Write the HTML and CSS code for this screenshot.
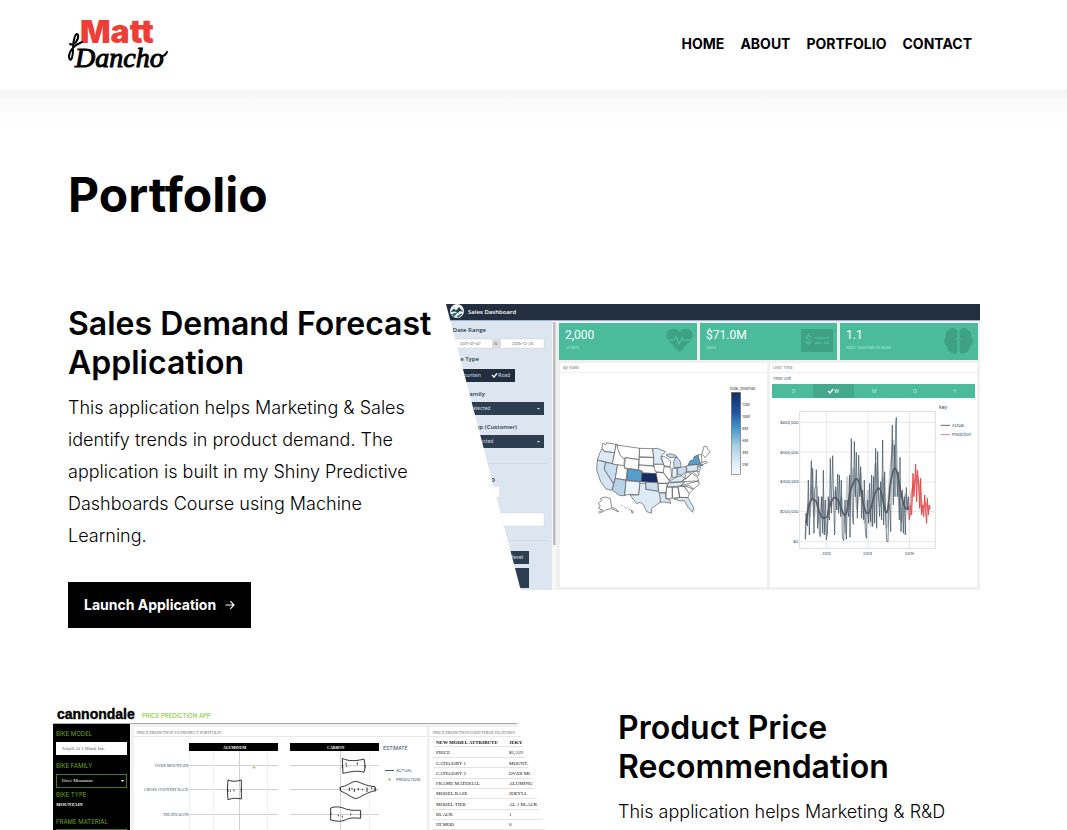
FILE: index.html
```html
<!DOCTYPE html>
<html lang="en">
<head>
<meta charset="utf-8">
<meta name="viewport" content="width=device-width, initial-scale=1">
<title>Portfolio - Matt Dancho</title>
<link rel="stylesheet" href="styles.css">
</head>
<body>
<header class="site-header">
  <a class="logo" href="#" aria-label="Matt Dancho">
    <svg width="100" height="60" viewBox="0 0 100 60">
      <text class="logo-first" x="12" y="28">Matt</text>
      <text class="logo-last" x="7" y="52">Dancho</text>
      <path class="logo-swash" d="M2 29C6 31 11 25 10 20C8 16 5 24 5 34C5 44 2 48 1 42C1 36 6 30 14 27M94 41C96 41 98 39 99 37"/>
    </svg>
  </a>
  <nav class="site-nav">
    <a href="#">Home</a>
    <a href="#">About</a>
    <a href="#">Portfolio</a>
    <a href="#">Contact</a>
  </nav>
</header>

<main class="content">
  <h1 class="page-title">Portfolio</h1>

  <section class="project">
    <div class="project-text">
      <h2>Sales Demand Forecast Application</h2>
      <p>This application helps Marketing &amp; Sales identify trends in product demand. The application is built in my Shiny Predictive Dashboards Course using Machine Learning.</p>
      <a class="launch" href="#">Launch Application
        <svg width="10" height="10" viewBox="0 0 10 10" aria-hidden="true"><path d="M0.5 5H9M5.3 1.2L9 5L5.3 8.8" fill="none" stroke="#fff" stroke-width="1.2"/></svg>
      </a>
    </div>
    <svg class="shot shot-right" viewBox="446 304 534 286" role="img" aria-label="Sales Dashboard">
      <rect x="446" y="304" width="534" height="286" fill="#f0f0f0"/>
      <rect x="446" y="320" width="106" height="270" fill="#dde6f0"/>
      <rect x="446" y="304" width="534" height="16" fill="#212f41"/>
      <rect x="446" y="320" width="534" height="1" fill="#9db3d2"/>
      <circle cx="457" cy="311" r="7" fill="#f4f7f8"/>
      <path d="M450.500 312L454 308.500L456 310.500L459 307L463.500 312L460 311L458 313L455 311.500Z" fill="#1f4650"/>
      <path d="M451 315L456 313.500L453 317M457 317L462 314" stroke="#32716f" fill="none" stroke-width="1.500"/>
      <g class="panel-label">
        <text x="468" y="314" fill="#fff">Sales Dashboard</text>
        <g fill="#26374a" text-anchor="end">
          <text x="486" y="332">Date Range</text>
          <text x="479" y="361">Bike Type</text>
          <text x="485" y="396">Bike Family</text>
          <text x="517" y="429">Bikeshop (Customer)</text>
        </g>
      </g>
      <rect x="448" y="339" width="96" height="9" fill="#fff" stroke="#ccd3db" stroke-width=".5"/>
      <rect x="492" y="339" width="9" height="9" fill="#ddd"/>
      <g class="t4" fill="#666"><text x="460" y="345">2011-01-07</text><text x="494" y="345">to</text><text x="512" y="345">2015-12-25</text></g>
      <rect x="448" y="369" width="67" height="13" fill="#202e3f"/>
      <g fill="#2c3e50">
        <rect x="448" y="402" width="96" height="13"/>
        <rect x="448" y="435" width="96" height="13"/>
        <rect x="500" y="551" width="29" height="13"/>
        <rect x="500" y="568" width="29" height="20"/>
      </g>
      <g class="t5" fill="#d4dae0">
        <text x="459" y="377">Mountain</text><text x="498" y="377">Road</text>
        <text x="463" y="410">All selected</text><text x="466" y="443">All selected</text>
        <text x="510" y="559">Reset</text>
      </g>
      <path d="M492 375L494 377L497 373.500" stroke="#fff" fill="none" stroke-width="1.300"/>
      <path d="M537 408h3l-1.500 1.500zM537 441h3l-1.500 1.500z" fill="#fff"/>
      <path d="M480 463.500H548M480 540.500H548" stroke="#d5dae0" stroke-width="1"/>
      <circle cx="493" cy="480" r="1.500" fill="none" stroke="#33465b"/>
      <rect x="470" y="487" width="29" height="10" fill="#fff"/>
      <rect x="470" y="513" width="74" height="13" fill="#fff" stroke="#d4dbe2" stroke-width=".5"/>
      <rect x="552" y="321" width="4" height="269" fill="#f8f8f8"/>
      <rect x="553" y="322" width="2.500" height="223" fill="#b9bbbd"/>

      <g fill="#4bbb9b">
        <rect x="559" y="323" width="138" height="37"/>
        <rect x="700" y="323" width="137" height="37"/>
        <rect x="840" y="323" width="138" height="37"/>
      </g>
      <g class="t12" fill="#fff"><text x="565" y="339">2,000</text><text x="706" y="339">$71.0M</text><text x="846" y="339">1.1</text></g>
      <g class="t4" fill="#a5e6d0"><text x="566" y="349">Orders</text><text x="706" y="349">Sales</text><text x="846" y="349">Ratio, Mountain to Road</text></g>
      <path d="M679.500 352L668 340C665 336 666 329 673 329C676 329 678 330 679.500 332C681 330 683 329 686 329C693 329 694 336 691 340Z" fill="#3ea183"/>
      <path d="M667 340H674L676 336L679 344L682 338L683 340H692" fill="none" stroke="#4bbb9b" stroke-width="1.500"/>
      <rect x="801" y="329" width="32" height="23" rx="1.500" fill="#3ea183"/>
      <text class="t12 dollar" x="805" y="344" fill="#4bbb9b">$</text>
      <path d="M815 338H829M815 343H821M824 343H829" stroke="#4bbb9b" stroke-width="1.500"/>
      <path d="M957.500 331C954 326 949 328 950 330C946 331 945 334 946 337C943 340 944 344 947 346C947 351 951 353 953 353C956 355 958 352 957.500 349ZM959.500 331C963 326 968 328 967 330C971 331 972 334 971 337C974 340 973 344 970 346C970 351 966 353 964 353C961 355 959 352 959.500 349Z" fill="#3ea183"/>
      <path d="M955.500 339.500L958.500 336.500L961.500 339.500M958.500 336.500V345" stroke="#4bbb9b" fill="none"/>

      <g fill="#fff">
        <rect x="560" y="363" width="207" height="9"/><rect x="560" y="373" width="207" height="214"/>
        <rect x="770" y="363" width="207" height="9"/><rect x="770" y="373" width="207" height="214"/>
      </g>
      <g class="t4" fill="#777"><text x="563" y="369">By State</text><text x="773" y="369">Over Time</text><text x="773" y="380" fill="#34495e">Time Unit</text></g>
      <rect x="772" y="384" width="203" height="14" fill="#4bbb9b"/>
      <rect x="813" y="384" width="41" height="14" fill="#43a88c"/>
      <g class="t5" fill="#b9ecdc"><text x="792" y="393">D</text><text x="834" y="393" fill="#fff">W</text><text x="872" y="393">M</text><text x="913" y="393">Q</text><text x="953" y="393">Y</text></g>
      <path d="M828 391L830 393L833 389" stroke="#fff" fill="none" stroke-width="1.300"/>

      <defs>
        <linearGradient id="revenue" x1="0" y1="0" x2="0" y2="1">
          <stop offset="0" stop-color="#172b63"/><stop offset=".25" stop-color="#2158a3"/><stop offset=".45" stop-color="#4a9bcd"/><stop offset=".65" stop-color="#a8cde6"/><stop offset=".85" stop-color="#deebf7"/><stop offset="1" stop-color="#f7fbff"/>
        </linearGradient>
      </defs>
      <rect x="731.500" y="392.500" width="9" height="82" fill="url(#revenue)" stroke="#444" stroke-width=".5"/>
      <g class="t4" fill="#333">
        <text x="730" y="390">total_revenue</text>
        <text x="742" y="406">12M</text><text x="742" y="418">10M</text><text x="742" y="430">8M</text><text x="742" y="442">6M</text><text x="742" y="454">4M</text><text x="742" y="466">2M</text>
      </g>
      <g class="states" transform="translate(580 375) scale(.3333)">
        <path fill="#f7fbff" d="M68 205L78 209L79 203L108 208L104 233L75 230L66 220Z"/>
        <path fill="#deebf7" d="M66 222L75 230L104 233L97 266L52 255L60 232Z"/>
        <path fill="#d5e5f4" d="M52 255L77 262L73 283L100 325L99 338L94 346L78 342L62 320L50 285Z"/>
        <path fill="#c9ddf0" d="M77 262L113 269L106 310L100 325L73 283Z"/>
        <path d="M108 208L114 210L122 240L133 252L132 275L97 266L104 233Z"/>
        <path d="M110 210L179 220L177 254L135 248L131 252L120 240Z"/>
        <path d="M136 248L177 254L175 284L133 279Z"/>
        <path d="M113 269L133 272L133 280L142 282L138 315L106 310Z"/>
        <path fill="#549fcd" d="M143 282L187 288L184 320L140 315Z"/>
        <path fill="#b7d4ea" d="M106 310L138 316L134 362L120 362L97 346L102 325Z"/>
        <path fill="#edf4fb" d="M138 317L180 321L176 360L150 358L134 361Z"/>
        <path d="M179 220L218 221L221 247L178 246ZM178 246L221 248L222 272L177 270Z"/>
        <path d="M177 270L215 273L226 277L231 296L186 294L187 288L176 284Z"/>
        <path fill="#172b63" d="M186 294L231 296L234 322L184 320Z"/>
        <path fill="#c9ddf0" d="M195 322L234 323L235 349L215 346L198 343L197 326Z"/>
        <path fill="#deebf7" d="M180 325L197 326L197 343L235 349L240 352L243 372L240 382L215 400L214 415L200 410L190 388L180 382L170 386L150 360L176 360Z"/>
        <path fill="#deebf7" d="M218 221L232 220L257 230L244 243L243 252L252 268L221 268L221 247Z"/>
        <path d="M221 268L250 268L257 282L250 293L226 290ZM228 292L250 293L268 318L262 325L234 325ZM234 325L262 325L258 352L237 354Z"/>
        <path fill="#d5e5f4" d="M238 354L256 354L258 372L270 374L272 385L255 381L242 382Z"/>
        <path d="M244 243L258 247L272 258L270 275L252 272ZM252 275L272 277L275 305L268 315L250 293Z"/>
        <path fill="#c4daee" d="M281 260L286 248L292 248L300 258L303 268L302 277L282 278ZM258 240L270 236L285 240L292 246L270 248Z"/>
        <path fill="#e3eef8" d="M277 280L291 280L291 305L276 308Z"/>
        <path fill="#c9ddf0" d="M293 279L318 274L319 290L306 300L293 300Z"/>
        <path fill="#deebf7" d="M268 318L291 306L306 302L314 310L304 320L270 322ZM264 324L316 320L302 333L262 336Z"/>
        <path d="M260 337L277 337L277 370L258 370ZM277 337L294 337L299 367L277 370ZM294 335L312 334L328 356L324 368L299 367Z"/>
        <path fill="#d5e5f4" d="M282 372L299 367L324 368L341 398L338 412L325 398L312 376L300 378Z"/>
        <path d="M312 334L328 331L340 342L328 356ZM302 332L355 318L358 328L340 342L316 334ZM304 320L320 310L335 294L354 308L355 318ZM314 310L319 292L335 294L320 310ZM338 290L351 288L358 300L352 302L344 295Z"/>
        <path fill="#d5e5f4" d="M320 272L352 268L355 282L350 288L320 290Z"/>
        <path fill="#549fcd" d="M324 270L330 258L340 255L342 245L354 240L360 268L370 270L362 274L352 268Z"/>
        <path d="M354 240L364 238L366 262L360 265ZM366 236L372 214L380 214L384 224L391 230L375 248ZM360 265L378 258L382 263L364 270ZM354 275L361 277L358 292L353 287Z"/>
        <path fill="none" d="M55 412L68 405L56 400L61 392L54 386L64 378L62 370L76 366L91 371L95 398L106 400L116 411L108 407L94 401L80 404L68 410L57 415M124 391L128 393M134 397L139 400M146 401L151 406M154 405L161 411L156 415Z"/>
      </g>

      <g transform="translate(768 400) scale(.3333)" fill="none">
        <path d="M95 67H502M95 156H502M95 246H502M95 335H502M95 425H502M176 34V445M300 34V445M424 34V445" stroke="#e6e6e6" stroke-width="3"/>
        <rect x="95" y="34" width="407" height="411" stroke="#ddd" stroke-width="3"/>
        <path stroke="#c9ccce" stroke-width="6" d="M112 415L120 310L126 350L132 255L139 350L146 260L154 370L162 290L170 365L176 405L184 300L190 320L202 270L211 330L220 290L232 400L238 230L244 330L255 205L267 330L278 220L290 370L300 270L310 380L322 190L336 320L344 230L356 385L366 220L376 120L388 250L400 370L412 280L424 360"/>
        <polyline stroke="#3a4c5e" stroke-width="2" stroke-linejoin="bevel" points="112,420 114,340 118,378 121,240 124,405 127,290 130,182 132,300 134,205 138,400 140,270 143,255 145,209 149,385 152,290 154,398 157,410 161,290 164,400 166,211 169,405 172,300 175,420 178,400 181,290 184,360 187,175 190,340 194,167 197,300 200,405 203,260 206,330 209,222 212,340 214,225 218,350 220,240 223,410 227,422 231,300 235,418 238,300 242,350 245,225 246,412 250,116 253,340 256,373 259,124 262,290 265,157 268,355 272,165 275,290 278,200 281,355 284,270 287,360 289,240 292,390 295,415 299,300 302,370 305,250 308,365 311,225 314,380 317,230 320,370 323,145 326,385 329,155 332,300 335,350 338,245 341,360 344,120 347,375 350,215 353,350 356,424 360,425 363,310 366,335 368,395 370,190 373,75 376,315 379,135 381,290 383,75 385,52 388,290 391,215 394,360 396,172 399,395 403,270 406,400 409,290 412,405 415,262 418,330 421,290 424,350"/>
        <path stroke="#555b61" stroke-width="5" d="M114 370C125 280 135 295 145 305C160 365 165 355 178 350C190 280 205 285 215 310C230 360 235 365 245 280C260 230 268 220 278 265C290 350 300 355 310 320C325 255 335 250 343 290C355 365 360 350 366 260C378 180 385 190 397 270C410 340 418 330 425 320"/>
        <polyline stroke="#e5a8aa" stroke-width="8" points="425,350 431,280 439,250 446,225 455,270 462,330 473,310 485,330"/>
        <polyline stroke="#e34b4d" stroke-width="3" points="424,360 427,315 431,345 435,220 438,290 441,240 443,192 446,305 448,210 452,250 455,325 458,235 461,345 464,315 467,350 470,285 473,335 476,370 478,295 481,345 484,315 487,325"/>
        <path stroke="#5b6b79" stroke-width="3" d="M518 76H546"/><path stroke="#ef7777" stroke-width="3" d="M518 104H546"/>
      </g>
      <g class="t4" fill="#34495e">
        <text x="780" y="424">$800,000</text><text x="780" y="454">$600,000</text><text x="780" y="483">$400,000</text><text x="780" y="513">$200,000</text><text x="793" y="543">$0</text>
        <text x="822" y="555">2012</text><text x="863" y="555">2014</text><text x="905" y="555">2016</text>
        <text x="952" y="427">Actual</text><text x="952" y="436">Prediction</text><text class="t5" x="939" y="409">key</text>
      </g>
    </svg>
  </section>

  <section class="project project-flip">
    <svg class="shot shot-left" viewBox="53 704 534 290" role="img" aria-label="Cannondale price prediction app">
      <rect x="53" y="704" width="534" height="290" fill="#fff"/>
      <text class="brand" x="57" y="719">cannondale</text>
      <text class="t6" x="142" y="718" fill="#7cc21e">PRICE PREDICTION APP</text>
      <rect x="131" y="724" width="456" height="270" fill="#f1f1f1"/>
      <rect x="53" y="723" width="534" height="1" fill="#aaa"/>
      <rect x="53" y="724" width="77" height="270"/>
      <g class="t6" fill="#6da91e"><text x="56" y="736">BIKE MODEL</text><text x="56" y="768">BIKE FAMILY</text><text x="56" y="797">BIKE TYPE</text><text x="56" y="824">FRAME MATERIAL</text></g>
      <rect x="56" y="742" width="71" height="13" fill="#fff"/>
      <rect x="56.500" y="774.500" width="70" height="13" fill="#000" stroke="#4d7a14"/>
      <rect x="56.500" y="829.500" width="70" height="13" fill="#000" stroke="#4d7a14"/>
      <g class="serif5"><text x="62" y="750" fill="#555">Jekyll Al 1 Black Inc.</text><text x="62" y="782" fill="#fff">Over Mountain</text><text class="bold slant" x="56" y="806" fill="#fff">MOUNTAIN</text></g>
      <path d="M121 780h3l-1.500 2z" fill="#fff"/>
      <rect x="134" y="727" width="293" height="267" fill="#fff"/>
      <rect x="430" y="727" width="157" height="267" fill="#fff"/>
      <path d="M134 736.500H427M430 736.500H587" stroke="#e8e8e8"/>
      <g class="serif4" fill="#666"><text x="137" y="734">PRICE PREDICTION VS PRODUCT PORTFOLIO</text><text x="433" y="734">PRICE PREDICTION USED THESE FEATURES</text></g>
      <g class="serif4" fill="#34495e"><text x="155" y="767">OVER MOUNTAIN</text><text x="144" y="791">CROSS COUNTRY RACE</text><text x="163" y="816">TRIATHALON</text></g>
      <path d="M188 765.500H278M188 789.500H278M188 814.500H278M290 765.500H379M290 789.500H379M290 814.500H379M239.500 751V830M340.500 751V830" stroke="#d2d2d2"/>
      <path d="M189.500 751V830M213.500 751V830M267.500 751V830M369.500 751V830" stroke="#f0f0f0"/>
      <rect x="189" y="743" width="89" height="8"/><rect x="290" y="743" width="89" height="8"/>
      <g class="serif4 bold" fill="#fff"><text x="223" y="749">ALUMINUM</text><text x="327" y="749">CARBON</text></g>
      <g class="violins" transform="translate(230 700) scale(.3333)">
        <path d="M-6 240C4 245 20 245 34 240V297C20 294 6 294-6 299L-8 270ZM337 175C354 184 378 184 402 177L406 200L402 217C382 210 360 216 339 220ZM330 262C350 260 364 245 376 244C390 245 404 258 435 260L438 272C408 276 392 294 376 296C360 290 346 278 332 273ZM302 324C320 317 336 322 350 328C370 333 380 330 392 331V355C370 353 358 353 346 360C330 366 318 364 302 360Z"/>
        <path d="M348 188v6M350 197v4M382 187v7M404 196v6M337 196v8M358 263v10M366 263v4M373 266v10M385 264v7M397 266v5M411 262v14M425 262v5M435 264v8M331 264v6M325 344v5M337 347v5M362 341v5M391 339v5M303 339v5M34 265v10M1 271v4M12 269v5M-6 268v8" stroke-width="5"/>
      </g>
      <path d="M385 770.500H394" stroke="#555"/>
      <path d="M254 766v3M252.500 767.500h3M389.500 778v3M388 779.500h3" stroke="#9ccf57"/>
      <text class="t5" x="383" y="750" fill="#34495e">ESTIMATE</text>
      <g class="t4" fill="#34495e"><text x="396" y="772">ACTUAL</text><text x="396" y="781">PREDICTION</text></g>
      <path d="M433 746.500H587M433 757.500H587M433 767.500H587M433 778.500H587M433 788.500H587M433 798.500H587M433 809.500H587M433 819.500H587M433 829.500H587" stroke="#e4e4e4"/>
      <g class="serif5" fill="#111">
        <g class="bold"><text x="436" y="744">NEW MODEL ATTRIBUTE</text><text x="509" y="744">JEKYLL</text></g>
        <text x="436" y="754">PRICE</text><text x="509" y="754">$5,559</text>
        <text x="436" y="765">CATEGORY 1</text><text x="509" y="765">MOUNTAIN</text>
        <text x="436" y="775">CATEGORY 2</text><text x="509" y="775">OVER MOUNTAIN</text>
        <text x="436" y="785">FRAME MATERIAL</text><text x="509" y="785">ALUMINUM</text>
        <text x="436" y="795">MODEL BASE</text><text x="509" y="795">JEKYLL</text>
        <text x="436" y="806">MODEL TIER</text><text x="509" y="806">AL 1 BLACK</text>
        <text x="436" y="816">BLACK</text><text x="509" y="816">1</text>
        <text x="436" y="826">HI MOD</text><text x="509" y="826">0</text>
      </g>
    </svg>
    <div class="project-text">
      <h2>Product Price Recommendation</h2>
      <p>This application helps Marketing &amp; R&amp;D</p>
    </div>
  </section>
</main>
</body>
</html>
```
FILE: styles.css
```css
* { box-sizing: border-box; }

body {
  margin: 0;
  background: #fff;
  color: #000;
  font-family: Inter, "Liberation Sans", sans-serif;
}

a { color: inherit; text-decoration: none; }

.site-header {
  display: flex;
  align-items: center;
  justify-content: space-between;
  height: 90px;
  padding: 0 95px 0 68px;
  background: #fff;
}

.logo svg { display: block; overflow: visible; }
.logo-first { fill: #ee3e37; font-size: 32px; font-weight: 900; }
.logo-last { font-family: "Liberation Serif", serif; font-size: 28px; font-style: italic; stroke: #000; stroke-width: 1; }
.logo-swash { fill: none; stroke: #000; stroke-width: 2; stroke-linecap: round; }

.site-nav {
  display: flex;
  gap: 16px;
  padding-bottom: 2px;
  font-size: 14px;
  font-weight: 700;
  line-height: 20px;
  text-transform: uppercase;
}

.content {
  padding: 73px 53px 0;
  background: linear-gradient(#f3f3f3, #fafafa 10px, #fdfdfd 24px, #fff 36px);
}

.page-title {
  margin: 0;
  padding-left: 15px;
  font-size: 48px;
  font-weight: 700;
  line-height: 64px;
}

.project {
  display: grid;
  grid-template-columns: 378fr 534fr;
  align-items: start;
  margin: 77px 34px 76px 15px;
}

.project-flip {
  grid-template-columns: 534fr 364fr;
  column-gap: 31px;
  margin: 0 32px 80px 0;
}

.project-flip .project-text { padding-top: 4px; }

.project-text h2 {
  margin: 0 0 10px;
  font-size: 32px;
  font-weight: 600;
  line-height: 39px;
}

.project-text p {
  margin: 0 16px 30px 0;
  font-size: 18px;
  font-weight: 300;
  line-height: 32px;
}

.launch {
  display: inline-flex;
  align-items: center;
  gap: 9px;
  padding: 13px 16px;
  background: #000;
  color: #fff;
  font-size: 14px;
  font-weight: 700;
  line-height: 20px;
  vertical-align: top;
}

.shot { display: block; width: 100%; }
.shot-right { clip-path: polygon(0 0, 100% 0, 100% 100%, 14% 100%); }
.shot-left { clip-path: polygon(0 0, 86% 0, 100% 100%, 0 100%); }

.t4 { font-size: 4px; }
.t5 { font-size: 5px; }
.t6 { font-size: 6px; }
.t12 { font-size: 12px; font-family: Roboto, sans-serif; }
.dollar { font-weight: 700; }
.panel-label { font: 600 6px "Open Sans", sans-serif; }
.bold { font-weight: 600; }
.slant { font-style: italic; }
.serif4 { font: 4px "Liberation Serif", serif; }
.serif5 { font: 5px "Liberation Serif", serif; }
.serif4.bold, .serif5 .bold { font-weight: 700; }
.serif5 .slant { font-style: italic; }
.brand { font: 700 14px "Liberation Sans", sans-serif; stroke: #000; stroke-width: 0.4; }

.states path { stroke: #555; stroke-width: 2; }
.states path:not([fill]) { fill: #fff; }
.violins path { fill: none; stroke: #333; stroke-width: 3; }
```
